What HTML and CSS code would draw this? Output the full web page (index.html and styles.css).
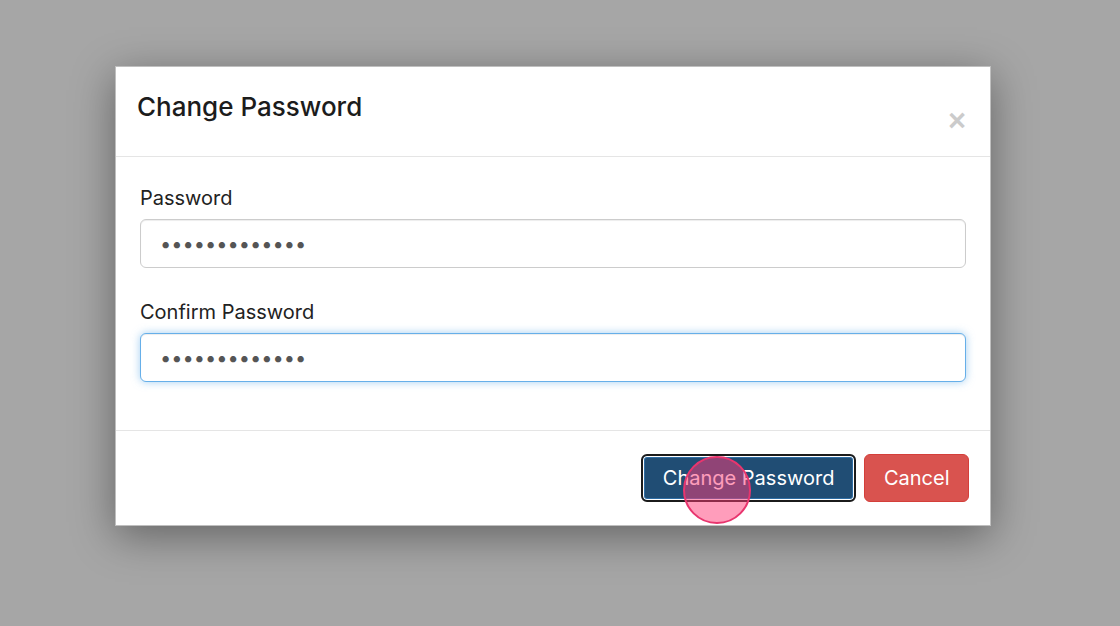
FILE: index.html
```html
<!DOCTYPE html>
<html lang="en">
  <head>
    <meta charset="UTF-8" />
    <meta name="viewport" content="width=device-width, initial-scale=1.0" />
    <title>Change Password</title>
    <link rel="stylesheet" href="styles.css">
  </head>
  <body>
    <div class="modal">
      <div class="modal-header">
        <h4 class="modal-title">Change Password</h4>
        <button class="close" type="button">&times;</button>
      </div>

      <div class="modal-body">
        <div class="form-group">
          <label for="password">Password</label>
          <input type="password" id="password" class="form-control" value="passwordpassw" />
        </div>
        <div class="form-group">
          <label for="confirm">Confirm Password</label>
          <input type="password" id="confirm" class="form-control is-focus" value="passwordpassw" />
        </div>
      </div>

      <div class="modal-footer">
        <button class="btn btn-primary" type="button">
          Change Password
          <!-- click indicator -->
          <span class="click-dot"></span>
        </button>
        <button class="btn btn-danger" type="button">Cancel</button>
      </div>
    </div>
  </body>
</html>
```

FILE: styles.css
```css
body {
  margin: 0;
  padding: 0;
  height: 100vh;
  background-color: #a6a6a6;
  font-family: "Inter", "Noto Sans", sans-serif;
  color: #1c1c1c;
  overflow: hidden;
}
.modal {
  width: 876px;
  margin: 66px 0 0 115px;
  background-color: #ffffff;
  border: 1px solid rgba(0, 0, 0, 0.25);
  box-sizing: border-box;
  box-shadow: 0 10px 40px rgba(0, 0, 0, 0.4);
}
.modal-header {
  display: flex;
  justify-content: space-between;
  align-items: flex-start;
  padding: 21px 24px 20px 21px;
  border-bottom: 1px solid #e5e5e5;
}
.modal-title {
  margin: 0;
  font-size: 26px;
  font-weight: 500;
  line-height: 37px;
}
.close {
  margin-top: 18px;
  padding: 0;
  border: none;
  background: none;
  font-family: "Liberation Sans", sans-serif;
  font-size: 31px;
  font-weight: 700;
  line-height: 30px;
  color: #000000;
  opacity: 0.2;
  cursor: pointer;
}
.modal-body {
  display: flex;
  flex-direction: column;
  gap: 30px;
  padding: 27px 24px 48px 24px;
}
.form-group {
  display: flex;
  flex-direction: column;
}
.form-group label {
  font-size: 20px;
  line-height: 28px;
  margin-bottom: 7px;
  color: #222222;
}
.form-control {
  height: 49px;
  box-sizing: border-box;
  padding: 0 19px;
  font-family: "Inter", sans-serif;
  font-size: 20px;
  letter-spacing: 0;
  color: #555555;
  background-color: #ffffff;
  border: 1px solid #cccccc;
  border-radius: 6px;
  box-shadow: inset 0 1px 1px rgba(0, 0, 0, 0.075);
  outline: none;
}
.form-control.is-focus {
  border-color: #66afe9;
  box-shadow: inset 0 1px 1px rgba(0, 0, 0, 0.075), 0 0 8px rgba(102, 175, 233, 0.6);
}
.modal-footer {
  display: flex;
  justify-content: flex-end;
  gap: 8px;
  padding: 23px 21px 23px 21px;
  border-top: 1px solid #e5e5e5;
}
.btn {
  position: relative;
  height: 48px;
  box-sizing: border-box;
  padding: 0 18.5px;
  font-family: "Inter", sans-serif;
  font-size: 20px;
  color: #ffffff;
  border-radius: 6px;
  cursor: pointer;
}
.btn-primary {
  padding: 0 20px;
  background-color: #204d74;
  border: 2px solid #1b1b1b;
  box-shadow: inset 0 0 0 1px #ffffff, inset 0 0 0 2px #2e6da4;
}
.btn-danger {
  background-color: #d9534f;
  border: 1px solid #d43f3a;
}
/* Click indicator drawn over the button */
.click-dot {
  position: absolute;
  left: 40px;
  top: 0px;
  width: 68px;
  height: 68px;
  box-sizing: border-box;
  border-radius: 50%;
  border: 2px solid #e8356e;
  background-color: rgba(255, 60, 120, 0.5);
}
```
